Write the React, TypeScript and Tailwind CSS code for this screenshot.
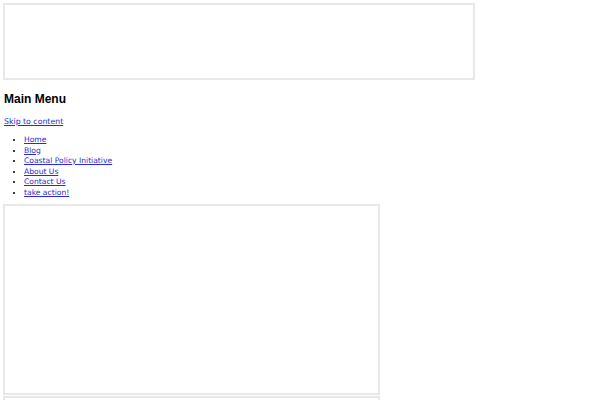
const menu = ['Home', 'Blog', 'Coastal Policy Initiative', 'About Us', 'Contact Us', 'take action!'];

export default function App() {
    return (
        <div className="min-h-[400px] bg-white pl-[3px] pt-[3px] overflow-hidden h-[400px]">
            {/* Header frame */}
            <div className="w-[472px] h-[77px] border-2 border-[#e8e8e8]" />

            <h2 className="ml-[1px] mt-[12px] text-[12px] leading-[15px] font-bold text-black font-['Liberation_Sans',Arial,sans-serif]">
                Main Menu
            </h2>

            <a href="#" className="ml-[1px] mt-[9px] block w-fit text-[7.8px] leading-[11px] text-[#2a2ad8] underline font-['DejaVu_Sans',Verdana,sans-serif]">
                Skip to content
            </a>

            <ul className="mt-[8px] pl-[21px] list-disc text-[7.6px] leading-[10.5px] font-['DejaVu_Sans',Verdana,sans-serif] marker:text-black">
                {menu.map((item) => (
                    <li key={item}>
                        <a href="#" className="text-[#2a2ad8] underline">{item}</a>
                    </li>
                ))}
            </ul>

            {/* Content frames */}
            <div className="mt-[6px] w-[377px] h-[191px] border-2 border-[#e8e8e8]" />
            <div className="mt-[1px] w-[377px] h-[40px] border-2 border-[#e8e8e8]" />
        </div>
    );
}
